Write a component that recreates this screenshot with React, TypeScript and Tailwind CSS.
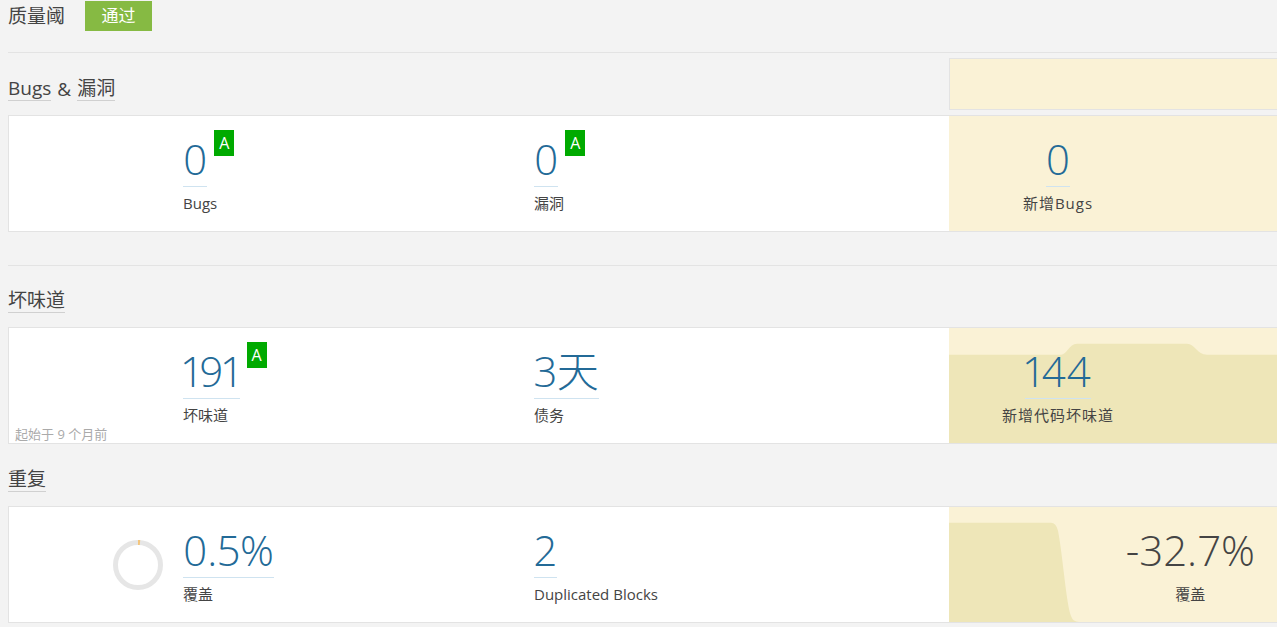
import React from "react";

const FONT = "font-['Open_Sans','Noto_Sans_CJK_SC',sans-serif]";

function Rating() {
  return (
    <span className="ml-[7px] -mt-[8px] flex h-[26px] w-[20px] items-center justify-center bg-[#00aa00] text-[16px] leading-none text-white">
      A
    </span>
  );
}

function Metric({ value, label, rating }: { value: string; label: string; rating?: boolean }) {
  return (
    <div>
      <div className="flex items-start">
        <div className="border-b border-[#cfe3f0] pb-[6px] text-[42px] font-light leading-none text-[#236a97] proportional-nums">
          {value}
        </div>
        {rating && <Rating />}
      </div>
      <div className="mt-[6px] text-[15px] leading-5 text-[#444]">{label}</div>
    </div>
  );
}

function NewMetric({ value, label }: { value: string; label: string }) {
  return (
    <div className="flex flex-col items-center">
      <div className="border-b border-[#cfe3f0] pb-[6px] text-[42px] font-light leading-none text-[#236a97] proportional-nums">
        {value}
      </div>
      <div className="mt-[6px] text-[15px] tracking-[1px] leading-5 text-[#444]">{label}</div>
    </div>
  );
}

function Heading({ parts }: { parts: string[] }) {
  return (
    <h2 className="flex items-end gap-[6px] text-[19px] leading-6 text-[#444]">
      {parts.map((p, i) =>
        p === "&" ? (
          <span key={i}>&amp;</span>
        ) : (
          <span key={i} className="border-b border-[#d0d0d0]">
            {p}
          </span>
        )
      )}
    </h2>
  );
}

export default function App() {
  return (
    <div className={`min-h-[627px] w-[1277px] overflow-hidden bg-[#f3f3f3] pl-2 pt-[1px] ${FONT}`}>
      {/* quality gate */}
      <div className="flex h-[30px] items-center">
        <span className="text-[19px] text-[#444]">质量阈</span>
        <span className="ml-[20px] flex h-[30px] w-[67px] items-center justify-center bg-[#86ba43] text-[17px] text-white">
          通过
        </span>
      </div>
      <div className="mt-[21px] border-t border-[#e3e3e3]" />

      {/* bugs & vulnerabilities */}
      <div className="flex h-[62px]">
        <div className="flex flex-1 items-end pb-[14px]">
          <Heading parts={["Bugs", "&", "漏洞"]} />
        </div>
        <div className="w-[328px] py-[5px]">
          <div className="h-full border border-r-0 border-[#e3e3e3] bg-[#faf2d6]" />
        </div>
      </div>
      <div className="flex border-y border-l border-[#e3e3e3] bg-white">
        <div className="flex flex-1 pb-[18px] pl-[174px] pt-[22px]">
          <div className="w-[351px]">
            <Metric value="0" label="Bugs" rating />
          </div>
          <Metric value="0" label="漏洞" rating />
        </div>
        <div className="flex w-[328px] bg-[#faf2d6] pt-[22px]">
          <div className="flex w-[218px] justify-center">
            <NewMetric value="0" label="新增Bugs" />
          </div>
        </div>
      </div>

      <div className="mt-[33px] border-t border-[#e3e3e3]" />

      {/* code smells */}
      <div className="flex h-[61px] items-end pb-[14px]">
        <Heading parts={["坏味道"]} />
      </div>
      <div className="relative flex border-y border-l border-[#e3e3e3] bg-white">
        <div className="flex flex-1 pb-[18px] pl-[174px] pt-[22px]">
          <div className="w-[351px]">
            <Metric value="191" label="坏味道" rating />
          </div>
          <Metric value="3天" label="债务" />
        </div>
        <span className="absolute bottom-0 left-[6px] text-[13px] leading-[17px] text-[#aaa]">
          起始于 9 个月前
        </span>
        <div className="relative flex w-[328px] bg-[#faf2d6] pt-[22px]">
          <svg className="absolute inset-0 h-full w-full" viewBox="0 0 328 116" preserveAspectRatio="none">
            <path
              d="M0 27 L112 27 C118 27 120 16 128 16 L238 16 C246 16 248 27 258 27 L328 27 L328 116 L0 116 Z"
              fill="#eee6b8"
            />
          </svg>
          <div className="relative flex w-[218px] justify-center">
            <NewMetric value="144" label="新增代码坏味道" />
          </div>
        </div>
      </div>

      {/* duplications */}
      <div className="flex h-[62px] items-end pb-[14px]">
        <Heading parts={["重复"]} />
      </div>
      <div className="flex border-y border-l border-[#e3e3e3] bg-white">
        <div className="flex flex-1 pb-[18px] pt-[22px]">
          <div className="flex w-[174px] items-center justify-end pr-[20px]">
            <svg width="50" height="50" viewBox="0 0 50 50" className="mt-[-4px]">
              <circle cx="25" cy="25" r="22.5" fill="none" stroke="#e6e6e6" strokeWidth="5" />
              <path d="M25 2.5 A22.5 22.5 0 0 1 27 2.6" fill="none" stroke="#f4c57b" strokeWidth="5" />
            </svg>
          </div>
          <div className="w-[351px]">
            <Metric value="0.5%" label="覆盖" />
          </div>
          <Metric value="2" label="Duplicated Blocks" />
        </div>
        <div className="relative flex w-[328px] justify-end bg-[#faf2d6] pr-[22px] pt-[22px]">
          <svg className="absolute inset-0 h-full w-full" viewBox="0 0 328 116" preserveAspectRatio="none">
            <path
              d="M0 16 L102 16 Q107 16 109 24 C114 50 117 96 122 110 Q124 116 130 116 L0 116 Z"
              fill="#eee6b8"
            />
          </svg>
          <div className="relative flex flex-col items-center">
            <div className="pb-[7px] text-[42px] font-light leading-none text-[#444]">-32.7%</div>
            <div className="mt-[6px] text-[15px] leading-5 text-[#444]">覆盖</div>
          </div>
        </div>
      </div>
    </div>
  );
}
